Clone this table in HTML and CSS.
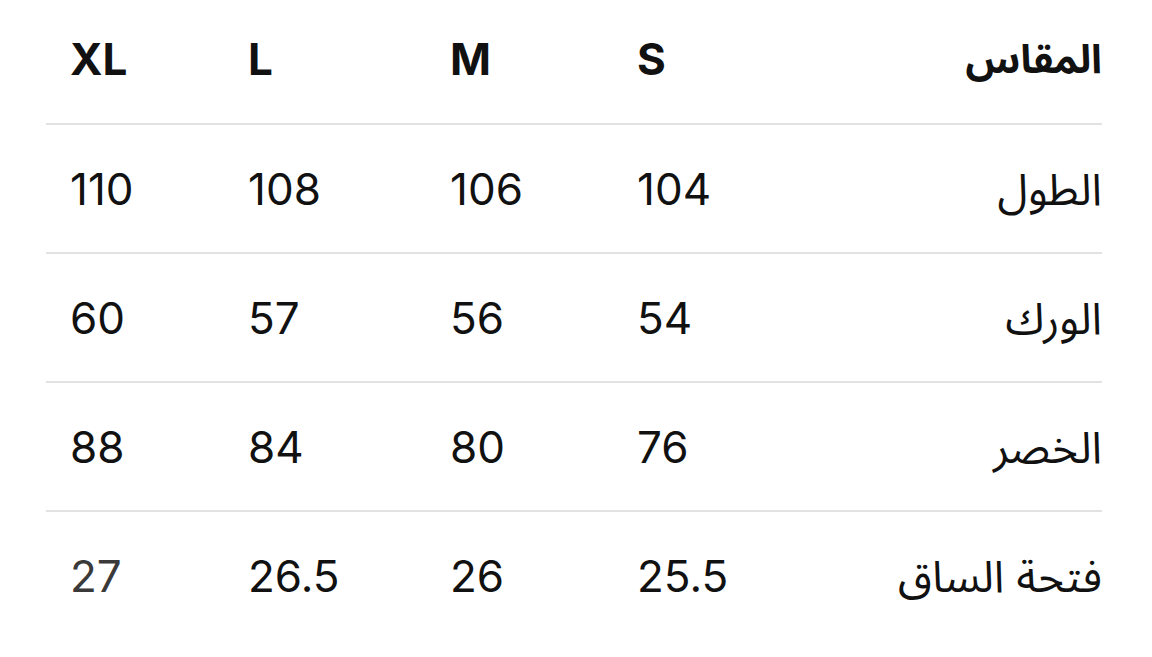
FILE: index.html
```html
<!DOCTYPE html>
<html lang="ar" dir="rtl">
<head>
<meta charset="utf-8">
<link rel="stylesheet" href="styles.css">
</head>
<body>
<div class="size-table">
  <div class="row head">
    <div class="cell label">المقاس</div>
    <div class="cell num">S</div>
    <div class="cell num">M</div>
    <div class="cell num">L</div>
    <div class="cell num">XL</div>
  </div>
  <div class="row">
    <div class="cell label">الطول</div>
    <div class="cell num">104</div>
    <div class="cell num">106</div>
    <div class="cell num">108</div>
    <div class="cell num">110</div>
  </div>
  <div class="row">
    <div class="cell label">الورك</div>
    <div class="cell num">54</div>
    <div class="cell num">56</div>
    <div class="cell num">57</div>
    <div class="cell num">60</div>
  </div>
  <div class="row">
    <div class="cell label">الخصر</div>
    <div class="cell num">76</div>
    <div class="cell num">80</div>
    <div class="cell num">84</div>
    <div class="cell num">88</div>
  </div>
  <div class="row last">
    <div class="cell label">فتحة الساق</div>
    <div class="cell num">25.5</div>
    <div class="cell num">26</div>
    <div class="cell num">26.5</div>
    <div class="cell num muted">27</div>
  </div>
</div>
</body>
</html>
```
FILE: styles.css
```css
html, body {
  margin: 0;
  padding: 0;
  background: #ffffff;
}
body {
  padding: 0 50px 0 46px;
  font-family: Inter, "Noto Sans Arabic", "DejaVu Sans", sans-serif;
  color: #111111;
}
.size-table {
  width: 1056px;
}
.row {
  display: grid;
  grid-template-columns: 1fr 190px 187px 202px 178px;
  align-items: center;
  height: 127px;
  border-bottom: 2px solid #e2e2e2;
}
.row.head {
  height: 117px;
  padding-bottom: 6px;
}
.row.last {
  border-bottom: none;
}
.cell {
  font-size: 44px;
  line-height: 1;
}
.label {
  text-align: right;
  padding-right: 0;
}
.num {
  direction: ltr;
  text-align: left;
  padding-left: 24px;
}
.head .cell {
  font-weight: 700;
}
.head .label {
  font-size: 40px;
}
.muted {
  color: #3a3a3a;
}
```
